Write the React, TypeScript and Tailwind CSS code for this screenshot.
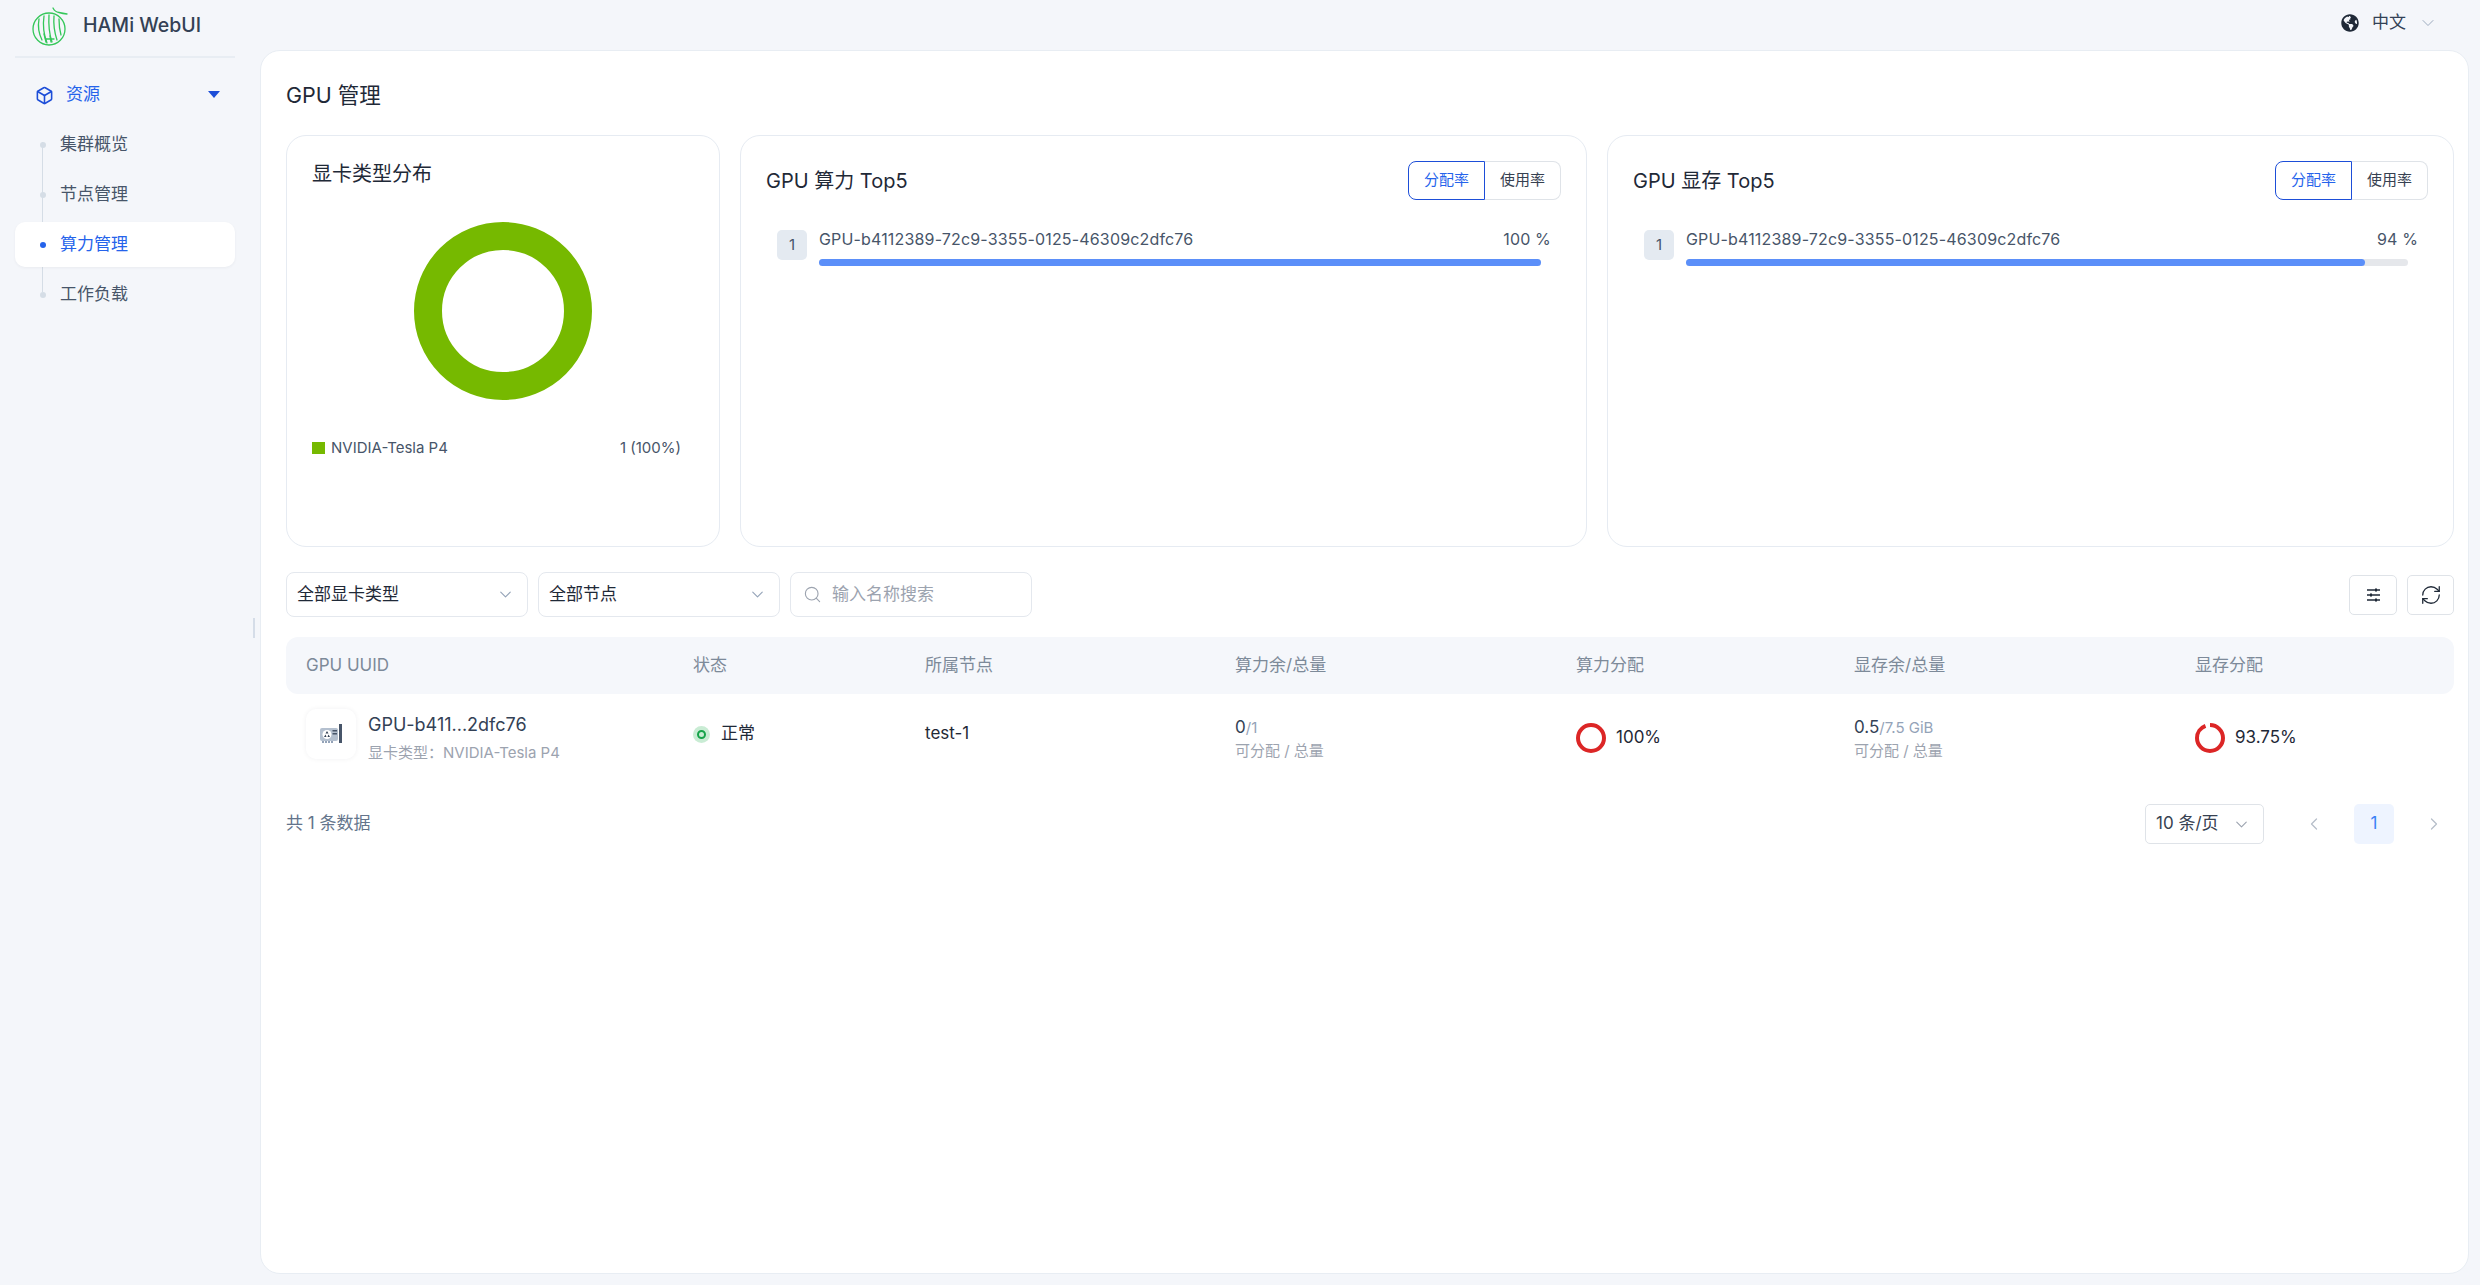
import { Box, ChevronDown, ChevronLeft, ChevronRight, RefreshCw, Search } from 'lucide-react'
import { FaGlobeAmericas } from 'react-icons/fa'

const font = { fontFamily: 'Inter, "Noto Sans CJK SC", sans-serif' }

function Logo() {
  return (
    <svg width="36" height="40" viewBox="0 0 36 40" fill="none" stroke="#34c759" strokeWidth="1.3" strokeLinecap="round">
      <circle cx="17" cy="23" r="16" />
      <path d="M21 2 Q23 6 27 6.500 Q31 7.500 35 8" />
      <path d="M7 13 Q5 24 10 34 M12 10 Q10 24 15 37 M17 9 Q16 24 20 36 M22 10 Q21 22 25 34 M27 13 Q27 22 29 29" />
      <path d="M12 28 L14 36 M18 30 L19 36 M14 33 L22 33" />
    </svg>
  )
}

function SideItem({ label, active }: { label: string; active?: boolean }) {
  return (
    <div className={`relative flex h-[45px] items-center rounded-[10px] pl-[45px] text-[17px] mb-[5px] ${active ? 'bg-white text-[#2563eb] shadow-[0_1px_3px_rgba(30,41,59,0.05)]' : 'text-[#475569]'}`}>
      <span className={`absolute left-[25px] top-[20px] h-[6px] w-[6px] rounded-full ${active ? 'bg-[#2563eb]' : 'bg-[#d5dde6]'}`} />
      {label}
    </div>
  )
}

function Sidebar() {
  return (
    <aside className="relative w-[260px] shrink-0">
      <div className="ml-[15px] flex h-[58px] w-[220px] items-center gap-[15px] border-b-2 border-[#e8edf3] pl-[17px] pb-[4px]">
        <Logo />
        <span className="text-[19.5px] font-medium text-[#334155]">HAMi WebUI</span>
      </div>
      <div className="ml-[15px] mt-[15px] w-[220px]">
        <div className="flex h-[44px] items-center pl-[20px] pr-[15px] text-[17px] text-[#2563eb]">
          <Box size={19} strokeWidth={2} className="text-[#1d4ed8]" />
          <span className="ml-[12px] flex-1">资源</span>
          <svg width="12" height="8" viewBox="0 0 12 8"><path d="M0 0h12L6 7z" fill="#1d4ed8" /></svg>
        </div>
        <div className="relative mt-[5px]">
          <span className="absolute left-[27px] top-[20px] h-[150px] w-px bg-[#d5dde6]" />
          <SideItem label="集群概览" />
          <SideItem label="节点管理" />
          <SideItem label="算力管理" active />
          <SideItem label="工作负载" />
        </div>
      </div>
      <span className="absolute left-[253px] top-[618px] h-[20px] w-[2px] bg-[#d5dde8]" />
    </aside>
  )
}

function Toggle() {
  return (
    <div className="flex h-[39px] text-[15px]">
      <div className="flex w-[77px] items-center justify-center rounded-l-[8px] border border-[#1d4ed8] text-[#2563eb]">分配率</div>
      <div className="flex w-[76px] items-center justify-center rounded-r-[8px] border border-l-0 border-[#dfe3e8] text-[#374151]">使用率</div>
    </div>
  )
}

function TopCard({ title, pct, width }: { title: string; pct: string; width: number }) {
  return (
    <div className="h-[412px] flex-1 rounded-[20px] border border-[#e6ebf2] px-[25px] pt-[25px]">
      <div className="flex items-center justify-between">
        <div className="text-[20px] text-[#1f2937]">{title}</div>
        <Toggle />
      </div>
      <div className="ml-[11px] mr-[10px] mt-[30px] flex">
        <div className="flex h-[30px] w-[30px] shrink-0 items-center justify-center rounded-[5px] bg-[#e4eaf1] text-[15px] text-[#475569]">1</div>
        <div className="ml-[12px] flex-1">
          <div className="flex h-[17px] items-center justify-between text-[16px] tracking-[0.01em] text-[#475569]">
            <span>GPU-b4112389-72c9-3355-0125-46309c2dfc76</span>
            <span>{pct}</span>
          </div>
          <div className="mt-[12px] h-[7px] w-[calc(100%-10px)] rounded-full bg-[#e5e7eb]">
            <div className="h-full rounded-full bg-[#5b8ff9]" style={{ width: `${width}%` }} />
          </div>
        </div>
      </div>
    </div>
  )
}

function DonutCard() {
  return (
    <div className="flex h-[412px] w-[434px] shrink-0 flex-col rounded-[20px] border border-[#e6ebf2] px-[25px] pt-[24px]">
      <div className="text-[20px] leading-[28px] text-[#1f2937]">显卡类型分布</div>
      <div className="mt-[34px] flex justify-center">
        <svg width="178" height="178" viewBox="0 0 178 178">
          <circle cx="89" cy="89" r="75" fill="none" stroke="#76b900" strokeWidth="28" />
        </svg>
      </div>
      <div className="mt-[37px] flex items-center pr-[13px] text-[15px] text-[#475569]">
        <span className="h-[12px] w-[13px] bg-[#76b900]" />
        <span className="ml-[6px] flex-1">NVIDIA-Tesla P4</span>
        <span>1 (100%)</span>
      </div>
    </div>
  )
}

function SelectBox({ label }: { label: string }) {
  return (
    <div className="flex h-[45px] w-[242px] items-center justify-between rounded-[8px] border border-[#e4e8ee] pl-[10px] pr-[12px] text-[17px] text-[#1f2937]">
      {label}
      <ChevronDown size={19} strokeWidth={1.4} className="text-[#94a3b8]" />
    </div>
  )
}

function Ring({ pct }: { pct: number }) {
  const c = 2 * Math.PI * 13
  return (
    <svg width="30" height="30" viewBox="0 0 30 30" className="-rotate-90">
      <circle cx="15" cy="15" r="13" fill="none" stroke="#dc2626" strokeWidth="4" strokeDasharray={`${(c * pct) / 100} ${c}`} />
    </svg>
  )
}

function GpuIcon() {
  return (
    <svg width="23" height="20" viewBox="0 0 23 20">
      <rect x="0" y="4" width="18" height="13" rx="2" fill="#b4c0cf" />
      <circle cx="7" cy="10.500" r="4.500" fill="#fff" />
      <path d="M7 7l1.500 2.400h-3zM4 13l1.500-2.400 1 2.400zM10 13l-1.500-2.400-1 2.400z" fill="#334155" />
      <rect x="12.500" y="6" width="4.500" height="1.500" fill="#475569" />
      <rect x="12.500" y="9" width="4.500" height="1.500" fill="#475569" />
      <path d="M2 17h2v2h-2zM5 17h2v2h-2zM8 17h2v2h-2zM11 17h2v2h-2z" fill="#94a3b8" />
      <rect x="19" y="0" width="3" height="19" fill="#475569" />
    </svg>
  )
}

function Metric({ value, total }: { value: string; total: string }) {
  return (
    <div>
      <div className="text-[17px] leading-[22px] text-[#334155]">
        {value}
        <span className="text-[15px] text-[#94a3b8]">/{total}</span>
      </div>
      <div className="mt-[2px] text-[15px] leading-[20px] text-[#9ca3af]">可分配 / 总量</div>
    </div>
  )
}

const columns = 'grid grid-cols-[387px_232px_310px_341px_278px_341px_1fr]'

function GpuTable() {
  return (
    <div>
      <div className={`${columns} mt-[20px] h-[57px] items-center rounded-[12px] bg-[#f5f7fb] pl-[20px] text-[17px] text-[#7d8a99]`}>
        <span>GPU UUID</span>
        <span>状态</span>
        <span>所属节点</span>
        <span>算力余/总量</span>
        <span>算力分配</span>
        <span>显存余/总量</span>
        <span>显存分配</span>
      </div>
      <div className={`${columns} h-[88px] items-center pl-[20px] text-[17px] text-[#1f2937]`}>
        <div className="flex items-center">
          <div className="mb-[8px] flex h-[50px] w-[50px] items-center justify-center rounded-[10px] bg-white shadow-[0_0_5px_rgba(30,41,59,0.06)]">
            <GpuIcon />
          </div>
          <div className="ml-[12px]">
            <div className="text-[18px] leading-[24px] text-[#334155]">GPU-b411...2dfc76</div>
            <div className="mt-[6px] text-[15px] leading-[20px] text-[#9ca3af]">显卡类型：NVIDIA-Tesla P4</div>
          </div>
        </div>
        <div className="mb-[8px] flex items-center">
          <span className="flex h-[17px] w-[17px] items-center justify-center rounded-full bg-[#c9ecd4]">
            <span className="h-[9px] w-[9px] rounded-full border-[2.500px] border-[#16a34a]" />
          </span>
          <span className="ml-[11px]">正常</span>
        </div>
        <div className="mb-[8px]">test-1</div>
        <Metric value="0" total="1" />
        <div className="flex items-center gap-[10px]">
          <Ring pct={100} />
          <span className="text-[17px]">100%</span>
        </div>
        <Metric value="0.5" total="7.5 GiB" />
        <div className="flex items-center gap-[10px]">
          <Ring pct={93.75} />
          <span className="text-[17px]">93.75%</span>
        </div>
      </div>
    </div>
  )
}

export default function App() {
  return (
    <div className="flex h-screen bg-[#f4f6fa]" style={font}>
      <Sidebar />
      <div className="flex min-w-0 flex-1 flex-col pr-[11px]">
        <div className="flex h-[50px] shrink-0 items-center justify-end pb-[4px] pr-[31px] text-[17px] text-[#334155]">
          <FaGlobeAmericas size={18} className="text-[#1f2937]" />
          <span className="ml-[13px]">中文</span>
          <ChevronDown size={20} strokeWidth={1.1} className="ml-[12px] text-[#94a3b8]" />
        </div>
        <main className="mb-[11px] flex-1 rounded-[20px] border border-[#e8edf3] bg-white pl-[25px] pr-[14px] pt-[29px]">
          <h1 className="text-[21.5px] leading-[30px] text-[#1f2937]">GPU 管理</h1>
          <div className="mt-[25px] flex gap-[20px]">
            <DonutCard />
            <TopCard title="GPU 算力 Top5" pct="100 %" width={100} />
            <TopCard title="GPU 显存 Top5" pct="94 %" width={94} />
          </div>
          <div>
            <div className="mt-[25px] flex gap-[10px]">
              <SelectBox label="全部显卡类型" />
              <SelectBox label="全部节点" />
              <div className="flex h-[45px] w-[242px] items-center gap-[10px] rounded-[8px] border border-[#e4e8ee] pl-[12px] text-[17px] text-[#9ca3af]">
                <Search size={19} strokeWidth={1.4} />
                输入名称搜索
              </div>
              <div className="ml-auto flex h-[40px] w-[48px] items-center justify-center self-center rounded-[5px] border border-[#dfe3e8]">
                <svg width="15" height="14" viewBox="0 0 15 14" fill="none" stroke="#1f2937" strokeWidth="1.300">
                  <path d="M1 2h13M1 7h13M1 12h13" />
                  <path d="M10 0.500v3M5 5.500v3M10 10.500v3" strokeWidth="2" />
                </svg>
              </div>
              <div className="flex h-[40px] w-[47px] items-center justify-center self-center rounded-[5px] border border-[#dfe3e8]">
                <RefreshCw size={22} strokeWidth={1.4} className="text-[#1f2937]" />
              </div>
            </div>
            <GpuTable />
            <div className="mt-[22px] flex h-[40px] items-center text-[17px] text-[#64748b]">
              <span className="flex-1">共 1 条数据</span>
              <div className="flex h-[40px] w-[119px] items-center justify-between rounded-[5px] border border-[#dfe3e8] pl-[10px] pr-[12px] text-[#374151]">
                10 条/页
                <ChevronDown size={19} strokeWidth={1.4} className="text-[#9ca3af]" />
              </div>
              <ChevronLeft size={20} strokeWidth={1.5} className="ml-[40px] text-[#b6bec9]" />
              <div className="ml-[30px] flex h-[40px] w-[40px] items-center justify-center rounded-[5px] bg-[#eef4ff] text-[#3b82f6]">1</div>
              <ChevronRight size={20} strokeWidth={1.5} className="ml-[30px] mr-[10px] text-[#b6bec9]" />
            </div>
          </div>
        </main>
      </div>
    </div>
  )
}
